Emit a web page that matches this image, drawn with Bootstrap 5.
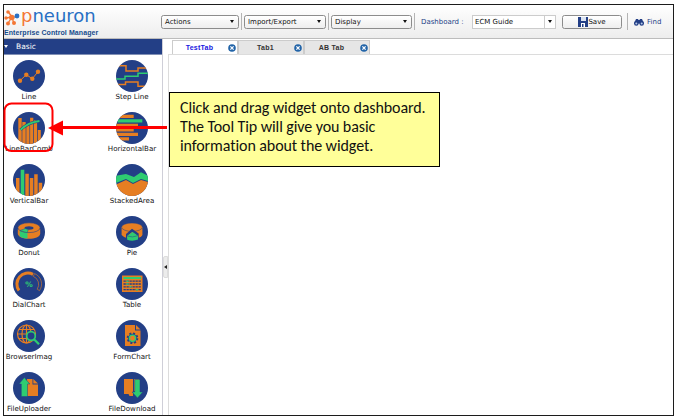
<!DOCTYPE html>
<html lang="en">
<head>
<meta charset="utf-8">
<title>Enterprise Control Manager</title>
<link href="https://cdn.jsdelivr.net/npm/bootstrap@5.3.0/dist/css/bootstrap.min.css" rel="stylesheet">
<style>
body{width:676px;height:420px;overflow:hidden;background:#fff;font:8px/10px "DejaVu Sans","Liberation Sans",sans-serif;color:#111}
.frame{width:671px;height:412px;margin:4px 0 0 3px;border:1px solid #1c1c1c}
.topbar{height:34px;background:linear-gradient(#fff,#ededed);border-bottom:1px solid #bcbcbc}
.brandbox{width:157px;padding-top:1px}
.brandrow{height:20px}
.logo-word{font:400 18px/20px "DejaVu Sans",sans-serif;color:#2870c4;margin-left:1px;margin-top:-4px}
.logo-word span{color:#f47735}
.brandsub{font:bold 7px/9px "Liberation Sans",sans-serif;color:#164c8c;white-space:nowrap;letter-spacing:.08px}
.picker{height:14px;border:1px solid #8c8c8c;border-radius:2.5px;background:linear-gradient(#fff,#eee);padding:0 4px 0 3px;font-size:7px;line-height:12px}
.caret{width:0;height:0;border:2.5px solid transparent;border-top:3px solid #111;border-bottom:0}
.sep{width:1px;height:17px;background:#b4b4b4}
.pick-actions{width:78px}
.pick-import{width:82px}
.pick-display{width:81px}
.sep-a{margin:0 2px}
.sep-b{margin:0 2px}
.sep-c{margin:0 6px 0 2px}
.sep-d{margin:0 6px 0 5px}
.dash-label{width:51px;font-size:7px;color:#233f86;white-space:nowrap}
.combo{height:14px;width:84px;border:1px solid #ccc;background:#fff;padding-left:2px;font-size:7px}
.combo b{width:11px;height:12px;border-left:1px solid #ccc}
.save{width:60px;margin-left:6px;padding:0}
.find-label{font-size:7px;color:#233f86;margin-left:3px}
.side{width:159px;border-right:1px solid #cfcfd8}
.sidehead{height:16px;background:#233f86;color:#fff;font-size:7.5px;border-bottom:1px solid #8190b5}
.wgrid{width:206px;margin-left:-27px;padding-top:5px}
.widget{height:52px;width:103px}
.widget svg{display:block;width:32px;height:32px}
.widget span{font-size:7.1px;line-height:8px;margin-top:1px;white-space:nowrap;color:#111;padding-left:1px}
.grip{width:5px;background:#fff;padding-top:80px}
.grip div{height:22px;background:#ececec;border:1px solid #ddd;border-radius:2px 0 0 2px}
.tabrow{height:15px;padding-left:4px}
.tabx{width:66px;height:14px;margin-top:1px;background:#e6e6e6;border:1px solid #ccc;border-bottom:0;font:bold 7px/11px "Liberation Sans",sans-serif;letter-spacing:.25px;padding-right:1px;color:#333}
.tabx span{margin-top:-1px;padding-right:2px}
.tabx.on{background:#fff;color:#1717e0}
.canvas{border:1px solid #dcdcdc;border-right:0;border-bottom:0}
.note{left:169px;top:92px;width:271px;height:75px;background:#ff9;border:1px solid #000;padding:5px 10px;font:16px/19px Carlito,Calibri,"Noto Sans",sans-serif;letter-spacing:-.09px;color:#111;white-space:nowrap}
.arrow{left:0;top:98px;width:170px;height:58px}
</style>
<script src="https://cdn.jsdelivr.net/npm/bootstrap@5.3.0/dist/js/bootstrap.bundle.min.js"></script>
</head>
<body class="position-relative">
<svg width="0" height="0" class="position-absolute"><defs>
<clipPath id="disc"><circle cx="16" cy="16" r="16"/></clipPath>
<symbol id="close" viewBox="0 0 8 8"><circle cx="4" cy="4" r="3.8" fill="#2264a8"/><path d="M2.4 2.4 5.6 5.6M5.6 2.4 2.4 5.6" stroke="#fff" stroke-width="1.3"/></symbol>
</defs></svg>
<div class="frame d-flex flex-column">
  <header class="topbar d-flex align-items-center flex-shrink-0">
    <div class="brandbox flex-shrink-0">
      <div class="brandrow d-flex align-items-center">
        <svg width="16" height="17" viewBox="0 0 16 17"><g stroke="#f47735" stroke-width="1.3"><path d="M8 8 4 2.5M8 8 2 9M8 8 3.5 15M8 8 10 15"/></g><path d="M8 8h5" stroke="#2870c4"/><g fill="#f47735"><circle cx="4" cy="3" r="1.8"/><circle cx="2" cy="9" r="1.7"/><circle cx="7.8" cy="8.5" r="2.8"/><circle cx="4" cy="14.5" r="2"/><circle cx="10" cy="14" r="2"/></g><circle cx="13" cy="7" r="2.4" fill="#2870c4"/></svg>
        <div class="logo-word"><span>p</span>neuron</div>
      </div>
      <div class="brandsub">Enterprise Control Manager</div>
    </div>
    <div class="picker pick-actions d-flex align-items-center justify-content-between">Actions<i class="caret"></i></div>
    <i class="sep sep-a"></i>
    <div class="picker pick-import d-flex align-items-center justify-content-between">Import/Export<i class="caret"></i></div>
    <i class="sep sep-b"></i>
    <div class="picker pick-display d-flex align-items-center justify-content-between">Display<i class="caret"></i></div>
    <i class="sep sep-c"></i>
    <span class="dash-label">Dashboard :</span>
    <div class="combo d-flex align-items-center justify-content-between"><span>ECM Guide</span><b class="d-flex align-items-center justify-content-center"><i class="caret"></i></b></div>
    <div class="save picker d-flex align-items-center justify-content-center"><svg width="10" height="10" viewBox="0 0 10 10"><path d="M0 0h10v10H0z" fill="#233f86"/><path d="M3 0h5v4H3z" fill="#dce4f2"/><path d="M3 6h4v4H3z" fill="#fff"/><path d="M4 7h1.5v3H4z" fill="#233f86"/></svg>Save</div>
    <i class="sep sep-d"></i>
    <svg width="10" height="8" viewBox="0 0 10 8"><path d="M2 1h2l.5 1h1L6 1h2l2 4.500H0z" fill="#233f86"/><circle cx="2.3" cy="5.4" r="2.3" fill="#233f86"/><circle cx="7.7" cy="5.4" r="2.3" fill="#233f86"/><circle cx="2.3" cy="5.5" r="1" fill="#b5c8e8"/><circle cx="7.7" cy="5.5" r="1" fill="#b5c8e8"/></svg>
    <span class="find-label">Find</span>
  </header>
  <div class="d-flex flex-grow-1" style="min-height:0">
    <aside class="side flex-shrink-0">
      <div class="sidehead d-flex align-items-center"><i class="caret" style="border-top-color:#fff"></i><span class="ms-2">Basic</span></div>
      <div class="wgrid d-flex flex-wrap">
        <div class="widget d-flex flex-column align-items-center"><svg viewBox="0 0 32 32"><circle cx="16" cy="16" r="16" fill="#233f86"/><path d="M7 20.7 13.3 14.7 19.3 18.7 25 11.7" stroke="#e67e22" fill="none"/><g fill="#e67e22"><circle cx="7" cy="20.7" r="2.2"/><circle cx="13.3" cy="14.7" r="2.2"/><circle cx="19.3" cy="18.7" r="2.2"/><circle cx="25" cy="11.7" r="2.2"/></g></svg><span>Line</span></div>
        <div class="widget d-flex flex-column align-items-center"><svg viewBox="0 0 32 32"><g clip-path="url(#disc)" fill="none" stroke-width="1.5"><path d="M0 0h32v32H0z" fill="#233f86"/><path d="M2 5.7h8V11h12V8h10M0 24.5h9.500V22H22v4.300h8" stroke="#e67e22"/><path d="M0 19h9v-2.700h13v-3h10" stroke="#2ecc71"/></g></svg><span>Step Line</span></div>
        <div class="widget d-flex flex-column align-items-center"><svg viewBox="0 0 32 32"><g clip-path="url(#disc)"><path d="M0 0h32v32H0z" fill="#233f86"/><path d="M5.3 6h3.4v26H5.3zM9.3 10h3.4v22H9.3zM13.3 13h3.2v19h-3.2zM17.1 5.7h3.2V32h-3.2zM21 8h3.1v24H21zM24.8 18h3v14h-3z" fill="#e67e22"/><path d="M7.5 17.8Q15 10.5 26.5 9" stroke="#233f86" stroke-width="3" fill="none"/><path d="M7.5 17.8Q15 10.5 26.5 9" stroke="#2ecc71" stroke-width="1.8" fill="none"/></g></svg><span>LineBarComb</span></div>
        <div class="widget d-flex flex-column align-items-center"><svg viewBox="0 0 32 32"><g clip-path="url(#disc)"><path d="M0 0h32v32H0z" fill="#233f86"/><path d="M0 2.7h17.7V6H0zM0 11.8h22V15H0zM0 16.3h17.7v3.2H0zM0 20.8h22V24H0zM0 25.2h13v3.2H0z" fill="#e67e22"/><path d="M1.5 7.3h24.8v3.2H1.5z" fill="#2ecc71"/></g></svg><span>HorizontalBar</span></div>
        <div class="widget d-flex flex-column align-items-center"><svg viewBox="0 0 32 32"><g clip-path="url(#disc)"><path d="M0 0h32v32H0z" fill="#233f86"/><path d="M3 14h3.5v18H3zM12.3 9.7h3.5V32h-3.5zM16.8 14h3.5v18h-3.5zM21.2 10.3h3.5V32h-3.5zM25.7 18.7h3.5V32h-3.5z" fill="#e67e22"/><path d="M7.7 5.7h3.6V32H7.7z" fill="#2ecc71"/></g></svg><span>VerticalBar</span></div>
        <div class="widget d-flex flex-column align-items-center"><svg viewBox="0 0 32 32"><g clip-path="url(#disc)"><path d="M0 0h32v32H0z" fill="#233f86"/><path d="M0 11.7 10 10l8 3 7-4.7 7 3.400V17l-7-2-8 4-7-4-10 4z" fill="#2ecc71"/><path d="M0 20.5 10 16l7 4 8-4 7 2v14H0z" fill="#e67e22"/></g></svg><span>StackedArea</span></div>
        <div class="widget d-flex flex-column align-items-center"><svg viewBox="0 0 32 32"><circle cx="16" cy="16" r="16" fill="#233f86"/><path d="M4.8 13v4.500c0 7 22.400 7 22.400 0V13z" fill="#e67e22"/><path d="M6.7 14.5 14.5 15v7.600q-5-.4-7.800-2.200z" fill="#2ecc71"/><ellipse cx="16" cy="11.7" rx="11.2" ry="4.9" fill="#e67e22" stroke="#233f86" stroke-width=".6"/><ellipse cx="16" cy="12" rx="4.5" ry="1.7" fill="#233f86"/><path d="m7 14.4 5.3-1.8 3 1.1-1.2 3z" fill="#2ecc71" stroke="#233f86" stroke-width=".4"/></svg><span>Donut</span></div>
        <div class="widget d-flex flex-column align-items-center"><svg viewBox="0 0 32 32"><circle cx="16" cy="16" r="16" fill="#233f86"/><path d="M5.6 11.5v7.500q2 2.500 6 3.200l9.500 0q4.500-1 5.300-3.200v-7.500z" fill="#e67e22"/><ellipse cx="16" cy="11.2" rx="10.4" ry="4.2" fill="#e67e22" stroke="#233f86" stroke-width=".5"/><path d="m16 12.800-6 5.200v5h1.200v-3l5-4 5.500 4v2.500h1v-5z" fill="#233f86"/><path d="m16.500 16 5.500 3.800v3.700q-5.500 2.200-10.800.2v-3.800z" fill="#2ecc71"/><path d="M11.2 20q5 2 10.800-.3" stroke="#233f86" stroke-width=".5" fill="none"/></svg><span>Pie</span></div>
        <div class="widget d-flex flex-column align-items-center"><svg viewBox="0 0 32 32"><circle cx="16" cy="16" r="16" fill="#233f86"/><path d="M6 22.5A11 11 0 0 1 20 6.3" stroke="#e67e22" stroke-width="3" fill="none"/><path d="M21.5 5.6a11.3 11.3 0 0 1 5 17l-2.300-1.400a8.600 8.600 0 0 0-3.900-12.800z" fill="none" stroke="#e67e22" stroke-width=".6"/><text x="16" y="18.800" text-anchor="middle" font-family="DejaVu Sans" font-weight="bold" font-size="7.500" fill="#2ecc71">%</text></svg><span>DialChart</span></div>
        <div class="widget d-flex flex-column align-items-center"><svg viewBox="0 0 32 32"><circle cx="16" cy="16" r="16" fill="#233f86"/><path d="M6 7.5h20.500V24H6z" fill="#e67e22"/><path d="M7.5 9h17.500v2H7.500z" fill="#2ecc71"/><path d="M7.5 13.2H25M7.5 16H25M7.5 18.8H25M7.5 21.7H25" stroke="#233f86" stroke-width="1.3" stroke-dasharray="2.300 .7"/><path d="M10.5 13.2h2M10.5 16h2M13.5 18.8h2M20 21.7h2" stroke="#2ecc71" stroke-width="1.5"/></svg><span>Table</span></div>
        <div class="widget d-flex flex-column align-items-center"><svg viewBox="0 0 32 32"><circle cx="16" cy="16" r="16" fill="#233f86"/><g fill="none" stroke="#e67e22" stroke-width="1.200"><circle cx="13.5" cy="14" r="9"/><ellipse cx="13.5" cy="14" rx="4.5" ry="9"/><path d="M13.5 5v18M4.5 14h18M6 9.5h15M6 18.5h15"/></g><circle cx="18" cy="16" r="4.3" fill="#233f86" stroke="#2ecc71" stroke-width="1.7"/><path d="m21 19.2 5 5" stroke="#2ecc71" stroke-width="2.300"/></svg><span>BrowserImag</span></div>
        <div class="widget d-flex flex-column align-items-center"><svg viewBox="0 0 32 32"><circle cx="16" cy="16" r="16" fill="#233f86"/><path d="M9 5h10v5.500h5.500V26H9z" fill="#e67e22"/><path d="M20 5v4.500h4.500z" fill="#e67e22"/><circle cx="16.5" cy="18.2" r="4.9" fill="none" stroke="#233f86" stroke-width="1.8" stroke-dasharray="2 1.85"/><circle cx="16.5" cy="18.2" r="4.4" fill="#233f86"/><circle cx="16.5" cy="18.2" r="3.1" fill="#e67e22" stroke="#2ecc71" stroke-width="1.3"/></svg><span>FormChart</span></div>
        <div class="widget d-flex flex-column align-items-center"><svg viewBox="0 0 32 32"><circle cx="16" cy="16" r="16" fill="#233f86"/><path d="M14 7h5.500v5.500H25V24H14z" fill="#e67e22"/><path d="M20.3 7v4.600H25z" fill="#e67e22"/><path d="m11.3 5.500 5.500 6.500h-2.300v12.500H8.300V12H6z" fill="#2ecc71" stroke="#233f86" stroke-width=".5"/></svg><span>FileUploader</span></div>
        <div class="widget d-flex flex-column align-items-center"><svg viewBox="0 0 32 32"><circle cx="16" cy="16" r="16" fill="#233f86"/><path d="M8 7h9v17h-3.500l-1-2H8z" fill="#e67e22"/><path d="M18 7h5v12h-5z" fill="#e67e22"/><path d="M18.700 7.500h5.300v12.500h2.800L21.500 26 16 20h2.700z" fill="#2ecc71" stroke="#233f86" stroke-width=".5"/></svg><span>FileDownload</span></div>
      </div>
    </aside>
    <div class="grip d-flex flex-column justify-content-center flex-shrink-0"><div class="d-flex align-items-center"><svg width="3" height="4" viewBox="0 0 3 4"><path d="M3 0v4L0 2z" fill="#222"/></svg></div></div>
    <main class="flex-grow-1 d-flex flex-column">
      <div class="tabrow d-flex">
        <div class="tabx on d-flex align-items-center justify-content-between"><span class="flex-grow-1 text-center">TestTab</span><svg width="8" height="8"><use href="#close"/></svg></div>
        <div class="tabx d-flex align-items-center justify-content-between"><span class="flex-grow-1 text-center">Tab1</span><svg width="8" height="8"><use href="#close"/></svg></div>
        <div class="tabx d-flex align-items-center justify-content-between"><span class="flex-grow-1 text-center">AB Tab</span><svg width="8" height="8"><use href="#close"/></svg></div>
      </div>
      <div class="canvas flex-grow-1"></div>
    </main>
  </div>
</div>
<svg class="arrow position-absolute" viewBox="0 98 170 58"><rect x="4.500" y="103.500" width="48" height="47.500" rx="7" fill="none" stroke="#f00" stroke-width="2"/><path d="M60 127.500h107" stroke="#f00" stroke-width="3"/><path d="M48 128l15-7.500v15z" fill="#f00"/></svg>
<div class="note position-absolute">Click and drag widget onto dashboard.<br>The Tool Tip will give you basic<br>information about the widget.</div>
</body>
</html>
